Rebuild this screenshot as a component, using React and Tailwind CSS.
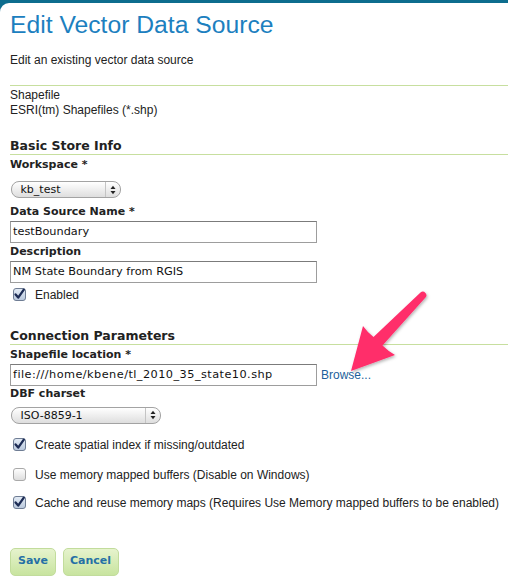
import React from "react";

const bodyFont = { fontFamily: '"Liberation Sans", Arial, sans-serif' };

function CheckBox({ checked }) {
  return (
    <svg width="13" height="13" viewBox="0 0 13 13" className="shrink-0">
      <defs>
        <linearGradient id={checked ? "cbOn" : "cbOff"} x1="0" y1="0" x2="0" y2="1">
          <stop offset="0" stopColor={checked ? "#e4ecf6" : "#ffffff"} />
          <stop offset="1" stopColor={checked ? "#b9c8dc" : "#dcdcdc"} />
        </linearGradient>
      </defs>
      <rect
        x="0.5"
        y="0.5"
        width="12"
        height="12"
        rx="2.5"
        fill={`url(#${checked ? "cbOn" : "cbOff"})`}
        stroke={checked ? "#6f7d94" : "#a9a9a9"}
      />
      {checked && (
        <path
          d="M2.6 6.4 L5.2 9.6 L10.8 1.6"
          fill="none"
          stroke="#1d2c55"
          strokeWidth="2.3"
          strokeLinecap="round"
          strokeLinejoin="round"
        />
      )}
    </svg>
  );
}

function MacSelect({ value, width }) {
  return (
    <div
      className={`flex items-center h-[17px] rounded-[8px] border border-[#a3a3a3] bg-gradient-to-b from-[#ffffff] to-[#dedede] ${width}`}
    >
      <span
        className="flex-1 pl-[9px] text-[11px] leading-[15px] text-[#111]"
        style={{ fontFamily: '"DejaVu Sans", sans-serif' }}
      >
        {value}
      </span>
      <span className="h-full w-px bg-[#c4c4c4]" />
      <span className="flex w-[14px] justify-center">
        <svg width="6" height="10" viewBox="0 0 6 10">
          <path d="M0.5 4 L3 0.8 L5.5 4 Z" fill="#222" />
          <path d="M0.5 6 L3 9.2 L5.5 6 Z" fill="#222" />
        </svg>
      </span>
    </div>
  );
}

function TextInput({ value, wide }) {
  return (
    <div
      className={`w-[307px] h-[22px] shrink-0 border border-[#9d9d9d] border-t-[#7b7b7b] bg-white pl-[2px] text-[11.3px] leading-[20px] text-[#111] whitespace-nowrap ${
        wide ? "tracking-[0.45px]" : ""
      }`}
      style={{ fontFamily: '"DejaVu Sans", sans-serif' }}
    >
      {value}
    </div>
  );
}

function Label({ children, className = "" }) {
  return (
    <div
      className={`h-[14px] text-[11px] leading-[14px] font-bold text-[#222] ${className}`}
      style={{ fontFamily: '"DejaVu Sans", sans-serif' }}
    >
      {children}
    </div>
  );
}

function Heading({ children, className = "" }) {
  return (
    <div
      className={`h-[17px] text-[12.5px] leading-[16px] font-bold text-[#222] border-b border-[#c7df9f] ${className}`}
      style={{ fontFamily: '"DejaVu Sans", sans-serif' }}
    >
      {children}
    </div>
  );
}

function CheckRow({ checked, children, className = "" }) {
  return (
    <div className={`flex items-center h-[16px] pl-[3px] ${className}`}>
      <CheckBox checked={checked} />
      <span className="ml-[9px] text-[12px] leading-[16px] text-[#222]" style={bodyFont}>
        {children}
      </span>
    </div>
  );
}

function GreenButton({ children, width }) {
  return (
    <div
      className={`flex items-center justify-center h-[28px] ${width} rounded-[5px] border border-[#c2dc9c] bg-gradient-to-b from-[#e6f3cd] to-[#c8e49f] text-[11px] font-bold text-[#2570a6]`}
      style={{ fontFamily: '"DejaVu Sans", sans-serif' }}
    >
      {children}
    </div>
  );
}

export default function App() {
  return (
    <div className="relative w-[508px] h-[581px] overflow-hidden bg-gradient-to-b from-[#0d6d8e] to-[#0a5a79] pt-[3px]">
      <div className="h-full bg-white rounded-tl-[9px] pl-[10px]">
        <div
          className="pt-[6.5px] h-[36.5px] text-[24.7px] leading-[30px] text-[#1c80bf]"
          style={bodyFont}
        >
          Edit Vector Data Source
        </div>
        <div className="mt-[12.8px] text-[12px] leading-[16px] text-[#222]" style={bodyFont}>
          Edit an existing vector data source
        </div>
        <div className="mt-[16.7px] border-t border-[#c7df9f]" />
        <div className="mt-[2.3px] text-[12px] leading-[15px] text-[#222]" style={bodyFont}>
          <div>Shapefile</div>
          <div>ESRI(tm) Shapefiles (*.shp)</div>
        </div>

        <Heading className="mt-[20px]">Basic Store Info</Heading>
        <Label className="mt-[3px]">Workspace *</Label>
        <div className="mt-[8.8px] pl-[0.5px]">
          <MacSelect value="kb_test" width="w-[110px]" />
        </div>
        <Label className="mt-[7.2px]">Data Source Name *</Label>
        <div className="mt-[1.8px]">
          <TextInput value="testBoundary" />
        </div>
        <Label className="mt-[2px]">Description</Label>
        <div className="mt-[1.8px]">
          <TextInput value="NM State Boundary from RGIS" />
        </div>
        <CheckRow checked className="mt-[4px]">Enabled</CheckRow>

        <Heading className="mt-[25px]">Connection Parameters</Heading>
        <Label className="mt-[3px]">Shapefile location *</Label>
        <div className="mt-[2px] flex items-start">
          <TextInput value="file:///home/kbene/tl_2010_35_state10.shp" wide />
          <span
            className="ml-[4px] mt-[3px] text-[12px] leading-[16px] text-[#1c5f9b]"
            style={bodyFont}
          >
            Browse...
          </span>
        </div>
        <Label className="mt-[1px]">DBF charset</Label>
        <div className="mt-[6px] pl-[0.5px]">
          <MacSelect value="ISO-8859-1" width="w-[150px]" />
        </div>

        <CheckRow checked className="mt-[13px]">Create spatial index if missing/outdated</CheckRow>
        <CheckRow className="mt-[13.7px]">Use memory mapped buffers (Disable on Windows)</CheckRow>
        <CheckRow checked className="mt-[12px]">
          Cache and reuse memory maps (Requires Use Memory mapped buffers to be enabled)
        </CheckRow>

        <div className="mt-[37px] flex gap-[6.5px]">
          <GreenButton width="w-[46px]">Save</GreenButton>
          <GreenButton width="w-[56px]">Cancel</GreenButton>
        </div>
      </div>

      <svg
        className="absolute left-0 top-0 pointer-events-none"
        width="508"
        height="581"
        viewBox="0 0 508 581"
      >
        <defs>
          <filter id="shadow" x="-20%" y="-20%" width="140%" height="140%">
            <feDropShadow dx="1" dy="1.5" stdDeviation="1.5" floodColor="#000" floodOpacity="0.3" />
          </filter>
        </defs>
        <path
          d="M351 371 L363 326 Q368 333 373.5 337 L420.5 292.5 Q423 290.5 425.5 293 Q427.5 295.5 425.5 297.5 L382.5 345.5 Q388 351 395 355 Z"
          fill="#ff2d6b"
          filter="url(#shadow)"
        />
      </svg>
    </div>
  );
}
